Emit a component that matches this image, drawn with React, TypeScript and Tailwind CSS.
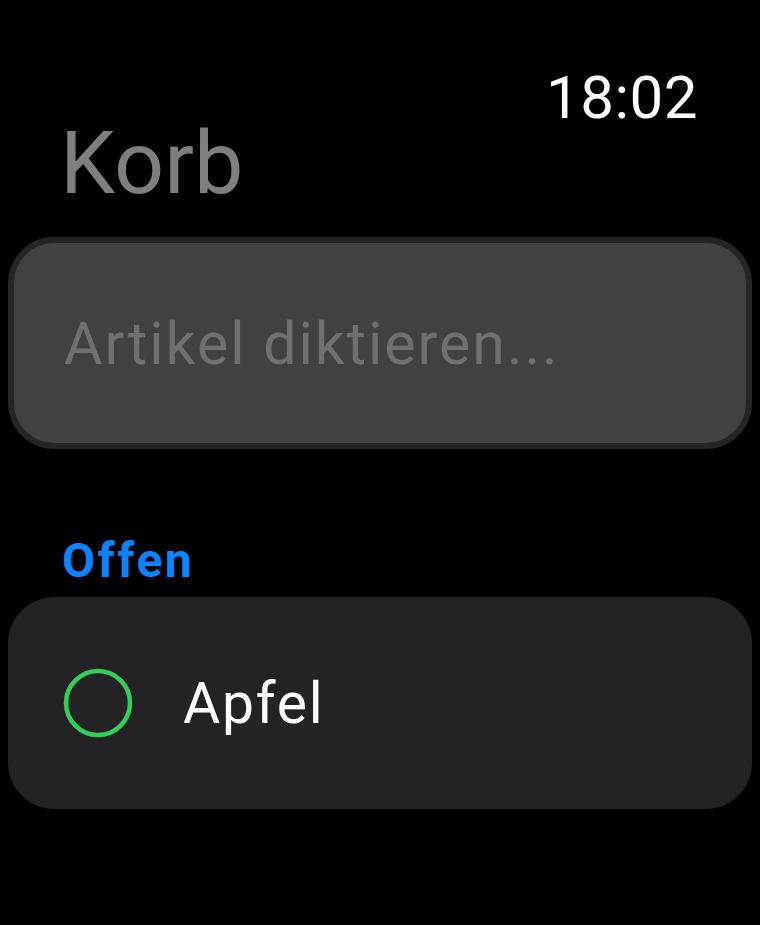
import React from "react";

const font = { fontFamily: "Roboto, 'Liberation Sans', sans-serif" };

export default function App() {
  return (
    <div
      className="w-[760px] h-[925px] bg-black text-white overflow-hidden flex flex-col"
      style={font}
    >
      <div className="flex justify-end pr-[62px] pt-[68px] h-[132px]">
        <span className="text-[60px] leading-none font-normal tracking-[0.5px]">18:02</span>
      </div>
      <h1 className="pl-[60px] text-[88px] leading-none text-[#7f7f7f] -mt-[13px] h-[118px]">
        Korb
      </h1>
      <div className="mx-[8px] h-[212px] rounded-[46px] border-[6px] border-[#252527] bg-[#414143] flex items-center px-[50px]">
        <span className="text-[59px] text-[#707074] leading-none tracking-[2px]">
          Artikel diktieren...
        </span>
      </div>
      <div className="pl-[62px] mt-[88px] text-[48px] leading-none font-bold tracking-[2.5px] text-[#0a84ff]">
        Offen
      </div>
      <div className="mx-[8px] mt-[12px] h-[212px] rounded-[46px] bg-[#232325] flex items-center pl-[55px]">
        <svg width="70" height="70" viewBox="0 0 70 70">
          <circle cx="35" cy="35" r="32" fill="none" stroke="#30d158" strokeWidth="4.5" />
        </svg>
        <span className="ml-[50px] text-[57px] leading-none tracking-[1.8px]">Apfel</span>
      </div>
    </div>
  );
}
